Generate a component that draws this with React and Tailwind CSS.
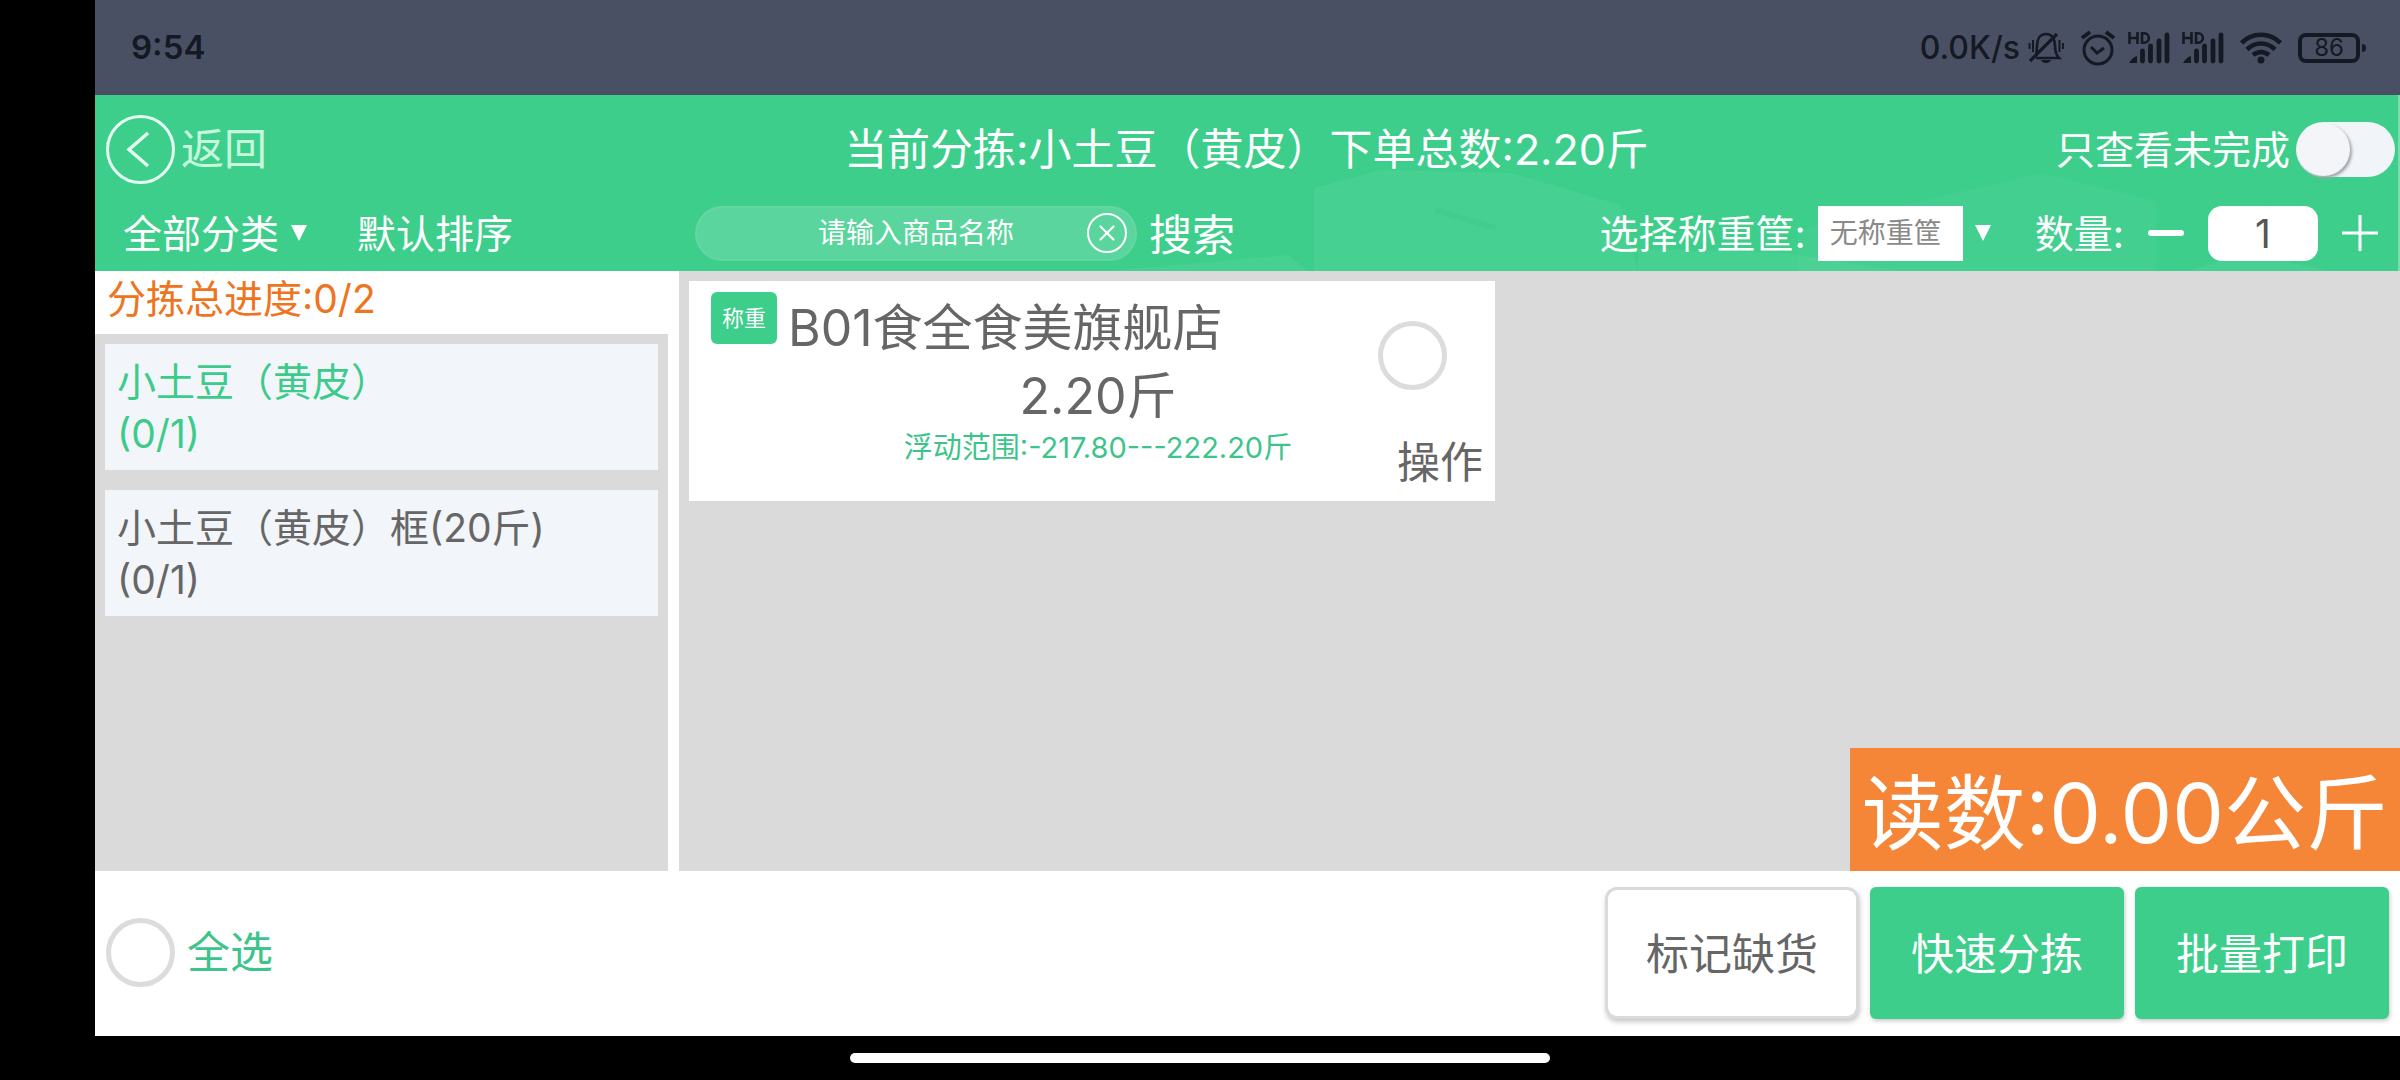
import React, { useState } from "react";
import { X } from "lucide-react";

const goods = [
  { id: 1, name: "小土豆（黄皮）", progress: "(0/1)" },
  { id: 2, name: "小土豆（黄皮）框(20斤)", progress: "(0/1)" },
];

const BellOffIcon = () => (
  <svg className="h-8 w-9" viewBox="0 0 36 32" fill="none" stroke="currentColor">
    <path d="M8 26h23c-3-3-4-6-4-12 0-7-3-12-9-12S9 7 9 14c0 4 0 6-1 9" strokeWidth="2.6" />
    <path d="M2 29L29 2" strokeWidth="3.2" />
    <path d="M5 8v12M31.500 8v12M1.500 11v6M35 11v6" strokeWidth="2" />
    <path d="M13 28h10c-1 4-9 4-10 0z" fill="currentColor" stroke="none" />
  </svg>
);

const AlarmIcon = () => (
  <svg className="h-9 w-9" viewBox="0 0 36 36" fill="none" stroke="currentColor" strokeWidth="3">
    <circle cx="18" cy="20" r="14" />
    <path d="M11 17l6 6 7-5" />
    <path d="M2 8l8-6M34 8l-8-6" strokeWidth="4" />
  </svg>
);

const SignalIcon = () => (
  <svg className="h-8 w-[42px]" viewBox="0 0 42 32" fill="none" stroke="currentColor">
    <path d="M1.500 0v12M9.500 0v12M1.500 6h8" strokeWidth="2.600" />
    <path d="M14 1.300h2c6.500 0 6.500 9.400 0 9.400h-2z" strokeWidth="2.600" />
    <path d="M1 31c2-3 4-6 8-7v7z" fill="currentColor" stroke="none" />
    <path d="M14.500 19v10M22.500 14v15M31 9v20M39 3v26" strokeWidth="4.800" strokeLinecap="round" />
  </svg>
);

const WifiIcon = () => (
  <svg className="h-8 w-[42px]" viewBox="0 0 42 32" fill="none" stroke="currentColor" strokeWidth="4.600">
    <path d="M1.500 11C12 0 30 0 40.500 11" />
    <path d="M7 17.500c8-8 20-8 28 0" />
    <path d="M13 23c5-4 11-4 16 0" />
    <circle cx="21" cy="28" r="3.500" fill="currentColor" stroke="none" />
  </svg>
);

const Triangle = () => (
  <svg className="h-4 w-4" viewBox="0 0 16 16" fill="currentColor">
    <path d="M0 0h16L8 16z" />
  </svg>
);

const StatusBar = () => (
  <div className="flex h-[95px] items-center justify-between bg-[#4a5063] pr-[34px] pl-9 text-[#141923]">
    <span className="text-[33px] font-semibold">9:54</span>
    <div className="flex items-center">
      <span className="mr-2 text-[32px] font-medium">0.0K/s</span>
      <BellOffIcon />
      <div className="ml-4 flex items-center gap-3">
        <AlarmIcon />
        <SignalIcon />
        <SignalIcon />
      </div>
      <div className="ml-4 flex items-center gap-4">
        <WifiIcon />
        <div className="flex items-center gap-[2px]">
          <span className="flex h-[30px] w-[62px] items-center justify-center rounded-lg border-4 border-current text-2xl leading-none">
            86
          </span>
          <span className="h-2 w-1 rounded-r-full bg-current" />
        </div>
      </div>
    </div>
  </div>
);

// pale crates behind the right half of the header
const HeaderArt = () => (
  <svg className="absolute bottom-0 right-0 h-[110px] w-[1290px]" viewBox="0 0 1290 110" fill="#ffffff">
    <path d="M206 27l67-18 130 3 110 32 17 66H206z" opacity="0.05" />
    <path d="M327 46l61 18v6l-61-18z" fill="#2fb97a" opacity="0.12" />
    <path d="M690 70l130-32 115-26 113 28v70H690z" opacity="0.03" />
    <path d="M530 88l150 4 110 18H530zM1080 110l60-18 80 18zM0 110l180-16 20 16z" opacity="0.05" />
  </svg>
);

const Header = ({ count, setCount }) => {
  const [keyword, setKeyword] = useState("");
  const [onlyOpen, setOnlyOpen] = useState(false);

  return (
    <header className="relative border-r-2 border-[#7fdcb0] bg-[#3dce8c] text-white">
      <HeaderArt />
      <div className="relative grid h-[100px] grid-cols-[1fr_auto_1fr] items-center px-[3px] pt-2">
        <button className="ml-2 flex items-center gap-1.5 text-[43px] leading-none text-[#c5f7dc]">
          <svg className="h-[69px] w-[69px]" viewBox="0 0 69 69" fill="none" stroke="#e4fff1" strokeWidth="3">
            <circle cx="34.500" cy="34.500" r="33" />
            <path d="M42 18L23 34.500 42 51" strokeWidth="3.500" />
          </svg>
          返回
        </button>
        <h1 className="text-[43px] leading-none">当前分拣:小土豆（黄皮）下单总数:2.20斤</h1>
        <label className="flex items-center gap-1.5 justify-self-end text-[39px] leading-none">
          只查看未完成
          <input
            type="checkbox"
            role="switch"
            className="peer sr-only"
            checked={onlyOpen}
            onChange={() => setOnlyOpen(!onlyOpen)}
          />
          <span className="flex h-[55px] w-[99px] rounded-full bg-[#f1f4f8] p-px peer-checked:justify-end">
            <span className="h-[53px] w-[53px] rounded-full bg-[#f3f5f8] shadow-[2px_2px_3px_#a0a4a8]" />
          </span>
        </label>
      </div>

      <div className="relative flex h-[76px] items-center pr-5 text-[39px] leading-none">
        <div className="flex w-[600px] items-center pl-7">
          <button className="flex items-center gap-3">
            全部分类
            <Triangle />
          </button>
          <button className="ml-[50px]">默认排序</button>
        </div>
        <div className="flex items-center gap-3">
          <div className="flex h-[55px] w-[442px] items-center rounded-full border-2 border-white/5 bg-white/15 pr-2 pl-12">
            <input
              aria-label="商品名称"
              className="min-w-0 flex-1 text-center text-[28px] outline-none placeholder:text-white"
              placeholder="请输入商品名称"
              value={keyword}
              onChange={(e) => setKeyword(e.target.value)}
            />
            <button
              aria-label="清空"
              className="flex h-10 w-10 items-center justify-center rounded-full border-2 border-white"
              onClick={() => setKeyword("")}
            >
              <X size={26} strokeWidth={2} />
            </button>
          </div>
          <button className="pt-1 text-[43px]">搜索</button>
        </div>
        <div className="ml-auto flex items-center">
          <label htmlFor="basket" className="mr-3">
            选择称重筐:
          </label>
          <select
            id="basket"
            className="mr-3 h-[55px] w-[145px] appearance-none bg-white px-3 text-[28px] text-[#8a8a8a] outline-none"
          >
            <option>无称重筐</option>
          </select>
          <Triangle />
          <label htmlFor="count" className="mr-6 ml-11">
            数量:
          </label>
          <button
            aria-label="减少"
            className="flex h-9 w-9 items-center"
            onClick={() => setCount(Math.max(1, count - 1))}
          >
            <span className="h-[6px] w-full rounded-full bg-white" />
          </button>
          <input
            id="count"
            className="mx-6 h-[55px] w-[110px] rounded-[14px] bg-white text-center text-[39px] text-[#555] outline-none"
            value={count}
            onChange={(e) => setCount(Number(e.target.value) || 1)}
          />
          <button aria-label="增加" onClick={() => setCount(count + 1)}>
            <svg className="h-9 w-9" viewBox="0 0 36 36" stroke="currentColor" strokeWidth="3">
              <path d="M0 18h36M18 0v36" />
            </svg>
          </button>
        </div>
      </div>
    </header>
  );
};

const Sidebar = ({ active, setActive }) => (
  <aside className="flex w-[573px] shrink-0 flex-col">
    <p className="flex h-[63px] items-center bg-white pb-2 pl-3 text-[39px] leading-none text-[#ee7420]">
      分拣总进度:0/2
    </p>
    <ul className="flex flex-1 flex-col gap-5 bg-[#dadada] p-2.5">
      {goods.map((item) => (
        <li key={item.id}>
          <button
            className={`w-full bg-[#f2f5f9] px-3 pt-3 pb-2.5 text-left text-[39px] leading-[52px] ${
              active === item.id ? "text-[#3dcb8b]" : "text-[#666]"
            }`}
            onClick={() => setActive(item.id)}
          >
            <span className="block">{item.name}</span>
            <span className="block">{item.progress}</span>
          </button>
        </li>
      ))}
    </ul>
  </aside>
);

const roundCheck =
  "h-[69px] w-[69px] appearance-none rounded-full border-[5px] border-[#dcdcdc] bg-white checked:bg-[#3dce8c]";

const OrderCard = () => (
  <article className="grid h-[220px] w-[806px] grid-cols-[99px_1fr_117px] bg-white text-[#666]">
    <div className="pt-[11px] pl-[22px]">
      <span className="flex h-[52px] w-[66px] items-center justify-center rounded-md bg-[#3dce8c] text-[22px] text-white">
        称重
      </span>
    </div>
    <div className="pt-[13px]">
      <h2 className="text-[50px] leading-[68px]">B01食全食美旗舰店</h2>
      <div className="pl-[30px] text-center">
        <p className="text-[50px] leading-[68px]">2.20斤</p>
        <p className="text-[29px] leading-9 text-[#3dc48a]">浮动范围:-217.80---222.20斤</p>
      </div>
    </div>
    <div className="flex flex-col justify-between pt-10 pr-3 pb-[17px]">
      <input type="checkbox" aria-label="选择订单" className={roundCheck} />
      <button className="self-end text-[43px] leading-none">操作</button>
    </div>
  </article>
);

const Footer = () => (
  <footer className="flex h-[165px] items-center justify-between bg-white pr-[11px] pb-0.5 pl-[11px] text-[43px] leading-none">
    <label className="flex items-center gap-3 text-[#3dc48a]">
      <input type="checkbox" className={roundCheck} />
      全选
    </label>
    <div className="flex gap-[11px]">
      <button className="h-[132px] w-[254px] rounded-xl border-[3px] border-[#dadada] bg-white pt-1 text-[#666] shadow-[1px_3px_5px_#c8c8c8]">
        标记缺货
      </button>
      <button className="h-[132px] w-[254px] rounded-md bg-[#3dce8c] pt-1 text-white shadow-[1px_2px_4px_#c8c8c8]">
        快速分拣
      </button>
      <button className="h-[132px] w-[254px] rounded-md bg-[#3dce8c] pt-1 text-white shadow-[1px_2px_4px_#c8c8c8]">
        批量打印
      </button>
    </div>
  </footer>
);

const App = () => {
  const [count, setCount] = useState(1);
  const [active, setActive] = useState(1);

  return (
    <div className="flex min-h-screen flex-col bg-black pl-[95px] font-[Inter,'Noto_Sans_CJK_SC',sans-serif]">
      <StatusBar />
      <Header count={count} setCount={setCount} />
      <main className="relative flex flex-1 gap-[11px] bg-white">
        <Sidebar active={active} setActive={setActive} />
        <section className="flex-1 bg-[#dadada] p-2.5">
          <OrderCard />
        </section>
        <div className="absolute right-0 bottom-0 flex h-[123px] items-center bg-[#f58638] px-3 pt-2 text-[82px] leading-none text-white">
          读数:0.00公斤
        </div>
      </main>
      <Footer />
      <div className="flex h-11 items-center justify-center pr-[95px]">
        <span className="h-2.5 w-[700px] rounded-full bg-white" />
      </div>
    </div>
  );
};

export default App;
